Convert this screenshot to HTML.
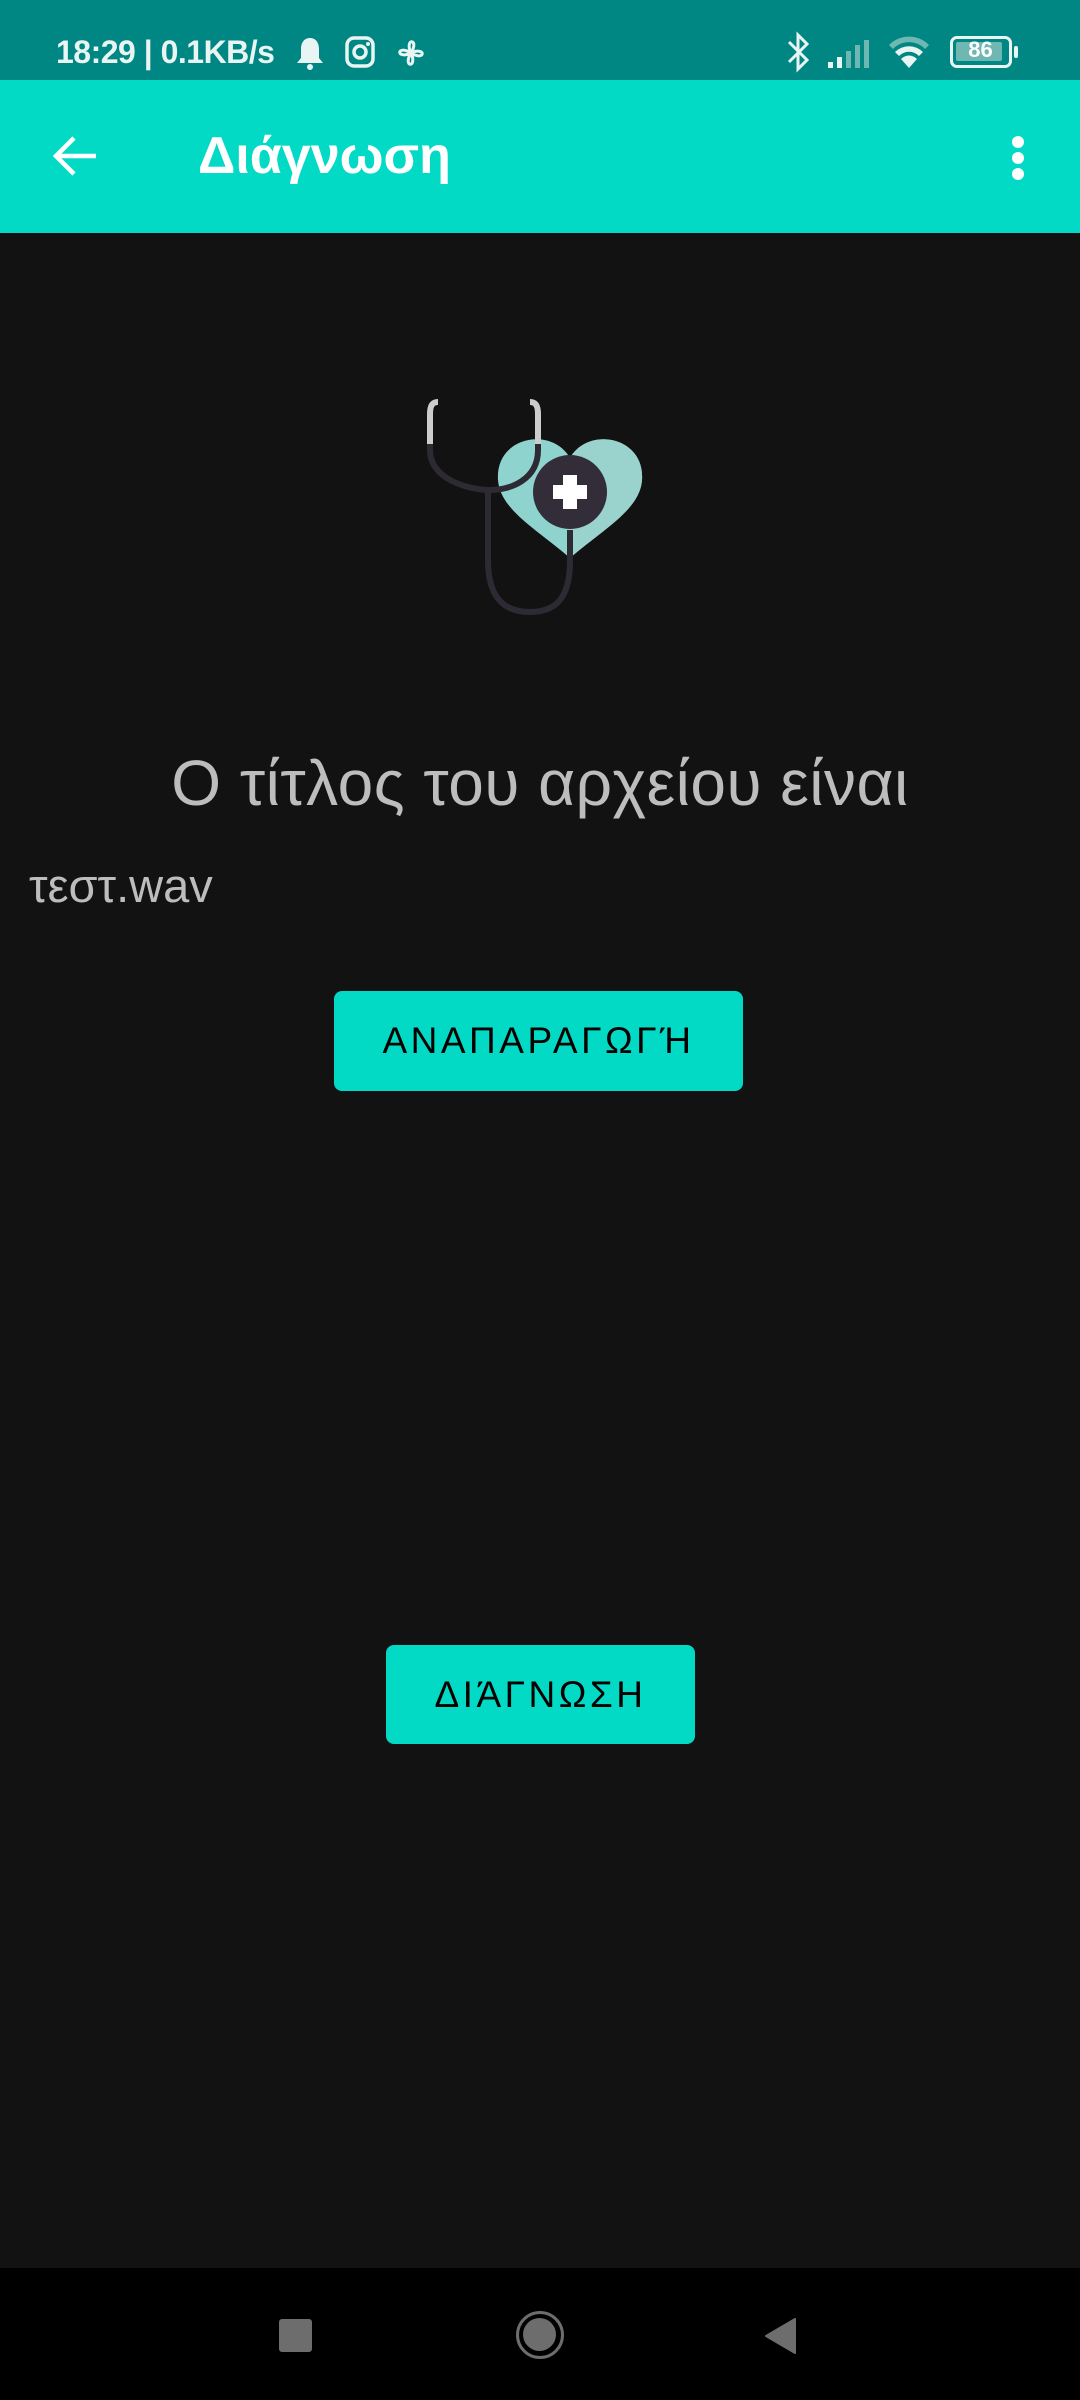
<!DOCTYPE html>
<html><head><meta charset="utf-8"><style>
*{margin:0;padding:0;box-sizing:border-box}
body{width:1080px;height:2400px;background:#121212;position:relative;overflow:hidden;font-family:"Liberation Sans","DejaVu Sans",sans-serif}
.abs{position:absolute}
.sb{left:0;top:0;width:1080px;height:80px;background:#008784;color:#e8f5f3;font-size:32px}
.tb{left:0;top:80px;width:1080px;height:153px;background:#03dac6}
.btn{background:#03dac6;border-radius:8px;color:#000;font-size:37px;letter-spacing:3.5px;display:flex;align-items:center;justify-content:center}
.nav{left:0;top:2268px;width:1080px;height:132px;background:#000}
</style></head><body>
<div class="abs sb">
 <div class="abs" style="left:56px;top:34px;font-size:32px;font-weight:bold;letter-spacing:-0.5px">18:29 | 0.1KB/s</div>
 <svg class="abs" style="left:295px;top:36px" width="30" height="36" viewBox="0 0 30 36"><path d="M15 2c-6 0-9 5-9 11v9l-4 5h26l-4-5v-9c0-6-3-11-9-11z" fill="#e8f5f3"/><circle cx="15" cy="31" r="3" fill="#e8f5f3"/></svg>
 <svg class="abs" style="left:345px;top:36px" width="30" height="32" viewBox="0 0 30 32"><rect x="2" y="2" width="26" height="28" rx="7" fill="none" stroke="#e8f5f3" stroke-width="3.5"/><circle cx="15" cy="16" r="6" fill="none" stroke="#e8f5f3" stroke-width="3.5"/><circle cx="23" cy="8" r="2" fill="#e8f5f3"/></svg>
 <svg class="abs" style="left:392px;top:34px" width="38" height="38" viewBox="0 0 38 38" fill="none" stroke="#e8f5f3" stroke-width="3"><path d="M19 19C12 4 28 4 19 19C34 12 34 28 19 19C26 34 10 34 19 19C4 26 4 10 19 19z"/></svg>
 <svg class="abs" style="left:785px;top:30px" width="28" height="44" viewBox="0 0 28 44" fill="none" stroke="#e8f5f3" stroke-width="3"><path d="M4 12l18 18-9 9V5l9 9L4 32"/></svg>
 <svg class="abs" style="left:826px;top:38px" width="50" height="32" viewBox="0 0 50 32"><rect x="2" y="24" width="5" height="6" fill="#e8f5f3"/><rect x="11" y="19" width="5" height="11" fill="#e8f5f3"/><rect x="20" y="13" width="5" height="17" fill="#6fb7b3"/><rect x="29" y="7" width="5" height="23" fill="#6fb7b3"/><rect x="38" y="2" width="5" height="28" fill="#6fb7b3"/></svg>
 <svg class="abs" style="left:887px;top:33px" width="44" height="40" viewBox="0 0 44 40"><path d="M2 12a28 28 0 0 1 40 0l-4 4a22 22 0 0 0-32 0z" fill="#6fb7b3"/><path d="M8 19a20 20 0 0 1 28 0l-4 4a14 14 0 0 0-20 0z" fill="#e8f5f3"/><path d="M14 26a11 11 0 0 1 16 0l-8 9z" fill="#e8f5f3"/></svg>
 <div class="abs" style="left:950px;top:36px;width:62px;height:32px;border:3.5px solid #e8f5f3;border-radius:7px"><div style="position:absolute;left:3px;top:3px;width:46px;height:19px;background:#6fb7b3;border-radius:2px"></div><div style="position:absolute;left:0;top:-2px;width:55px;text-align:center;font-size:22px;font-weight:bold;color:#fff">86</div></div>
 <div class="abs" style="left:1014px;top:46px;width:4px;height:12px;background:#e8f5f3;border-radius:2px"></div>
</div>
<div class="abs tb">
 <svg class="abs" style="left:52px;top:52px" width="48" height="48" viewBox="0 0 48 48" fill="none" stroke="#fff" stroke-width="4.5"><path d="M44 24H6M22 6L4 24l18 18"/></svg>
 <div class="abs" style="left:198px;top:46px;color:#fff;font-size:52px;font-weight:bold">Διάγνωση</div>
 <div class="abs" style="left:1012px;top:56px;width:12px;height:12px;border-radius:50%;background:#fff;box-shadow:0 16px 0 #fff,0 32px 0 #fff"></div>
</div>
<svg class="abs" style="left:420px;top:385px" width="240" height="240" viewBox="420 385 240 240">
 <path d="M570 458c-18-32-75-22-72 22c2 30 40 50 72 78c32-28 70-48 72-78c3-44-54-54-72-22z" fill="#8fd3cf"/>
 <path d="M570 458c18-32 75-22 72 22c-2 30-40 50-72 78z" fill="#9ad3cd"/>
 <path d="M438 402c-6 0-8 4-8 12v36c0 30 40 40 60 40s48-10 48-40v-36c0-8-2-12-8-12" fill="none" stroke="#2e2a33" stroke-width="6"/>
 <path d="M438 402c-6 0-8 4-8 12v30M530 402c6 0 8 4 8 12v30" stroke="#ccc" stroke-width="6" fill="none"/>
 <path d="M488 490v70c0 30 10 52 42 52s40-22 40-52v-30" fill="none" stroke="#2e2a33" stroke-width="6"/>
 <circle cx="570" cy="492" r="37" fill="#322d38"/>
 <path d="M563 475h14v10h10v14h-10v10h-14v-10h-10v-14h10z" fill="#fff"/>
</svg>
<div class="abs" style="left:0;top:746px;width:1080px;text-align:center;color:#bdbdbd;font-size:64px;letter-spacing:0.5px">Ο τίτλος του αρχείου είναι</div>
<div class="abs" style="left:29px;top:858px;color:#bdbdbd;font-size:47px">τεστ.wav</div>
<div class="abs btn" style="left:334px;top:991px;width:409px;height:100px">ΑΝΑΠΑΡΑΓΩΓΉ</div>
<div class="abs btn" style="left:386px;top:1645px;width:309px;height:99px">ΔΙΆΓΝΩΣΗ</div>
<div class="abs nav">
 <div class="abs" style="left:279px;top:51px;width:33px;height:33px;background:#6d6d6d;border-radius:3px"></div>
 <div class="abs" style="left:516px;top:43px;width:48px;height:48px;border:3.5px solid #6d6d6d;border-radius:50%"><div style="position:absolute;left:4px;top:4px;width:33px;height:33px;background:#6d6d6d;border-radius:50%"></div></div>
 <svg class="abs" style="left:764px;top:49px" width="34" height="38" viewBox="0 0 34 38"><path d="M31 2L2 19l29 17z" fill="#6d6d6d" stroke="#6d6d6d" stroke-width="2" stroke-linejoin="round"/></svg>
</div>
</body></html>
